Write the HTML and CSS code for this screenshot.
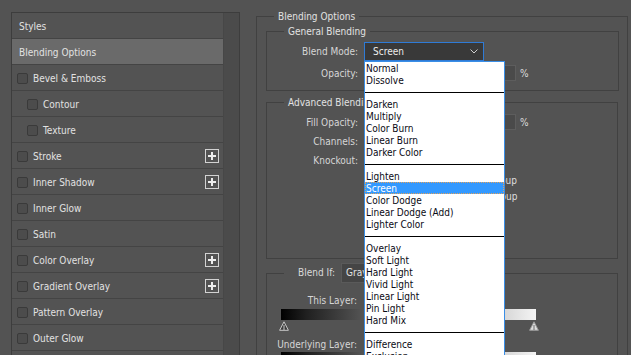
FILE: index.html
```html
<!DOCTYPE html>
<html lang="en">

<head>
    <meta charset="UTF-8" />
    <meta name="viewport" content="width=device-width, initial-scale=1.0" />
    <title>Layer Style</title>
    <link rel="stylesheet" href="styles.css">
</head>

<body>
    <div class="dialog">
        <div class="styles-panel">
            <ul class="style-list">
                <li class="style-item plain">Styles</li>
                <li class="style-item plain selected">Blending Options</li>
                <li class="style-item"><span class="check"></span>Bevel &amp; Emboss</li>
                <li class="style-item sub"><span class="check"></span>Contour</li>
                <li class="style-item sub"><span class="check"></span>Texture</li>
                <li class="style-item"><span class="check"></span>Stroke
                    <span class="add"><svg width="14" height="14" viewBox="0 0 14 14"><rect x="0.5" y="0.5" width="13" height="13" fill="none" stroke="#d2d2d2"/><path d="M7 3v8M3 7h8" stroke="#ececec" stroke-width="2"/></svg></span>
                </li>
                <li class="style-item"><span class="check"></span>Inner Shadow
                    <span class="add"><svg width="14" height="14" viewBox="0 0 14 14"><rect x="0.5" y="0.5" width="13" height="13" fill="none" stroke="#d2d2d2"/><path d="M7 3v8M3 7h8" stroke="#ececec" stroke-width="2"/></svg></span>
                </li>
                <li class="style-item"><span class="check"></span>Inner Glow</li>
                <li class="style-item"><span class="check"></span>Satin</li>
                <li class="style-item"><span class="check"></span>Color Overlay
                    <span class="add"><svg width="14" height="14" viewBox="0 0 14 14"><rect x="0.5" y="0.5" width="13" height="13" fill="none" stroke="#d2d2d2"/><path d="M7 3v8M3 7h8" stroke="#ececec" stroke-width="2"/></svg></span>
                </li>
                <li class="style-item"><span class="check"></span>Gradient Overlay
                    <span class="add"><svg width="14" height="14" viewBox="0 0 14 14"><rect x="0.5" y="0.5" width="13" height="13" fill="none" stroke="#d2d2d2"/><path d="M7 3v8M3 7h8" stroke="#ececec" stroke-width="2"/></svg></span>
                </li>
                <li class="style-item"><span class="check"></span>Pattern Overlay</li>
                <li class="style-item"><span class="check"></span>Outer Glow</li>
                <li class="style-item empty"></li>
            </ul>
            <div class="list-track"></div>
        </div>

        <div class="options">
            <fieldset class="group outer">
                <legend>Blending Options</legend>

                <fieldset class="group general">
                    <legend>General Blending</legend>
                    <div class="row">
                        <span class="label">Blend Mode:</span>
                        <div class="select-wrap">
                            <div class="select focused">
                                <span>Screen</span>
                                <svg class="chevron" width="8" height="5" viewBox="0 0 8 5"><path d="M0.5 0.5L4 4L7.5 0.5" fill="none" stroke="#cfcfcf"/></svg>
                            </div>
                            <ul class="menu">
                                <li>Normal</li>
                                <li>Dissolve</li>
                                <li class="sep"></li>
                                <li>Darken</li>
                                <li>Multiply</li>
                                <li>Color Burn</li>
                                <li>Linear Burn</li>
                                <li>Darker Color</li>
                                <li class="sep"></li>
                                <li>Lighten</li>
                                <li class="active">Screen</li>
                                <li>Color Dodge</li>
                                <li>Linear Dodge (Add)</li>
                                <li>Lighter Color</li>
                                <li class="sep"></li>
                                <li>Overlay</li>
                                <li>Soft Light</li>
                                <li>Hard Light</li>
                                <li>Vivid Light</li>
                                <li>Linear Light</li>
                                <li>Pin Light</li>
                                <li>Hard Mix</li>
                                <li class="sep"></li>
                                <li>Difference</li>
                                <li>Exclusion</li>
                            </ul>
                        </div>
                    </div>
                    <div class="row">
                        <span class="label">Opacity:</span>
                        <div class="slider"></div>
                        <div class="num"></div>
                        <span class="unit">%</span>
                    </div>
                </fieldset>

                <fieldset class="group advanced">
                    <legend>Advanced Blending</legend>
                    <div class="row">
                        <span class="label">Fill Opacity:</span>
                        <div class="slider"></div>
                        <div class="num"></div>
                        <span class="unit">%</span>
                    </div>
                    <div class="row channels">
                        <span class="label">Channels:</span>
                        <span class="check"></span>
                        <span class="check"></span>
                        <span class="check"></span>
                    </div>
                    <div class="row knockout">
                        <span class="label">Knockout:</span>
                        <div class="small-select"></div>
                    </div>
                    <ul class="checks">
                        <li><span class="check"></span>Blend Interior Effects as Group</li>
                        <li><span class="check"></span>Blend Clipped Layers as Group</li>
                        <li><span class="check"></span></li>
                        <li><span class="check"></span></li>
                        <li><span class="check"></span></li>
                    </ul>
                </fieldset>

                <fieldset class="group blend-if">
                    <legend>
                        <span class="legend-label">Blend If:</span>
                        <span class="gray-select">Gray</span>
                    </legend>
                    <div class="row layer-row">
                        <span class="label">This Layer:</span>
                    </div>
                    <div class="ramp"></div>
                    <div class="handles">
                        <svg width="10" height="10" viewBox="0 0 10 10"><path d="M5 0.8L9.4 9.3H0.6Z" fill="#3b3b3b" stroke="#c8c8c8" stroke-linejoin="round"/><path d="M5 4v5" stroke="#c8c8c8"/></svg>
                        <svg width="10" height="10" viewBox="0 0 10 10"><path d="M5 0.8L9.4 9.3H0.6Z" fill="#dedede" stroke="#9a9a9a" stroke-linejoin="round"/><path d="M5 4v5" stroke="#6a6a6a"/></svg>
                    </div>
                    <div class="row layer-row under">
                        <span class="label">Underlying Layer:</span>
                    </div>
                    <div class="ramp"></div>
                </fieldset>
            </fieldset>
        </div>
    </div>
</body>

</html>
```

FILE: styles.css
```css
* {
    box-sizing: border-box;
}

body {
    margin: 0;
    height: 355px;
    overflow: hidden;
    background: #535353;
    color: #dadada;
    font-family: "DejaVu Sans Condensed", "DejaVu Sans", sans-serif;
    font-stretch: condensed;
    font-size: 10px;
}

.dialog {
    display: flex;
    align-items: flex-start;
    padding: 10px 0 0 11px;
}

/* left column: list of layer styles */

.styles-panel {
    display: flex;
    width: 229px;
    margin-top: 2px;
    border: 1px solid #3d3d3d;
    border-bottom: none;
}

.style-list {
    width: 211px;
    margin: 0;
    padding: 0;
    list-style: none;
}

.style-item {
    display: flex;
    align-items: center;
    height: 26px;
    padding: 1px 0 0 5px;
    border-bottom: 1px solid #444;
    color: #e2e2e2;
    white-space: nowrap;
}

.style-item.plain {
    padding-left: 7px;
}

.style-item.sub {
    padding-left: 15px;
}

.style-item.selected {
    background: #6a6a6a;
}

.style-item .check {
    margin-right: 5px;
}

.check {
    display: inline-block;
    flex: none;
    width: 11px;
    height: 11px;
    border: 1px solid #3a3a3a;
    border-radius: 2px;
    background: #4c4c4c;
}

.add {
    display: flex;
    margin-left: auto;
    margin-right: 4px;
}

.list-track {
    width: 16px;
    background: #4b4b4b;
    border-left: 1px solid #474747;
}

/* right column: options */

.options {
    margin-left: 16px;
}

fieldset {
    margin: 0;
    min-width: 0;
    border: 1px solid #414141;
}

legend {
    padding: 0 4px;
    line-height: 13px;
    color: #e2e2e2;
}

.outer {
    width: 372px;
    padding: 2px 8px 0 9px;
    border-bottom: none;
}

.outer > legend {
    margin-left: 8px;
}

.general,
.advanced,
.blend-if {
    width: 353px;
}

.general > legend,
.advanced > legend {
    margin-left: 17px;
}

.general {
    padding: 4px 0 9px;
}

.advanced {
    margin-top: 5px;
    width: 352px;
    padding: 5px 0 6px;
}

.row {
    display: flex;
    align-items: center;
    height: 16px;
    white-space: nowrap;
}

.general .row:first-of-type {
    height: 19px;
    margin-bottom: 4px;
}

.label {
    width: 91px;
    margin-right: 6px;
    text-align: right;
    color: #d6d6d6;
}

.select-wrap {
    position: relative;
}

.select {
    display: flex;
    align-items: center;
    width: 120px;
    height: 19px;
    padding: 0 5px 0 8px;
    background: #393939;
    border: 1px solid #2f7bd6;
    color: #ececec;
}

.chevron {
    margin-left: auto;
}

/* open dropdown list, drawn over the form */
.menu {
    position: absolute;
    top: 19px;
    left: 0;
    z-index: 5;
    width: 141px;
    margin: 0;
    padding: 0;
    list-style: none;
    background: #fff;
    border: 1px solid #3a8ee6;
    border-bottom: none;
    color: #0a0a14;
}

.menu li {
    height: 12px;
    padding: 1px 0 0 1px;
    line-height: 11px;
    white-space: nowrap;
}

.menu .sep {
    background: linear-gradient(#000, #000) center / 100% 1px no-repeat;
}

.menu .active {
    background: #3399ff;
    color: #fff;
    outline: 1px dotted #e3a35c;
    outline-offset: -1px;
}

.slider {
    width: 100px;
    height: 4px;
    background: #3a3a3a;
}

.num {
    width: 40px;
    height: 16px;
    margin-left: 12px;
    background: #4a4a4a;
    border: 1px solid #5d5d5d;
}

.unit {
    margin-left: 4px;
    color: #dedede;
}

.channels {
    margin-top: 3px;
}

.channels .check {
    margin: 0 12px 0 4px;
}

.knockout {
    height: 18px;
    margin-top: 2px;
}

.small-select {
    width: 80px;
    height: 18px;
    background: #444;
    border: 1px solid #5a5a5a;
}

.checks {
    margin: 3px 0 0 97px;
    padding: 0;
    list-style: none;
}

.checks li {
    display: flex;
    align-items: center;
    height: 16px;
    white-space: nowrap;
    color: #dedede;
}

.checks .check {
    margin-right: 4px;
}

/* blend if */

.blend-if {
    width: 352px;
    margin-top: 4px;
    padding: 10px 0 0;
    border-bottom: none;
}

.blend-if > legend {
    display: flex;
    align-items: center;
    margin-left: 17px;
    padding: 0;
    line-height: 20px;
}

.legend-label {
    width: 51px;
    text-align: right;
    color: #dadada;
}

.gray-select {
    width: 90px;
    height: 20px;
    margin-left: 6px;
    padding-left: 4px;
    line-height: 18px;
    background: #454545;
    border: 1px solid #5a5a5a;
}

.layer-row {
    height: 14px;
}

.layer-row .label {
    width: 90px;
}

.under {
    margin-top: 6px;
}

.ramp {
    width: 255px;
    height: 11px;
    margin: 2px 0 0 14px;
    background: linear-gradient(to right, #000 0%, #202020 10%, #f4f4f4 100%);
}

.under + .ramp {
    margin-top: 1px;
}

.handles {
    display: flex;
    justify-content: space-between;
    width: 260px;
    height: 10px;
    margin: 1px 0 0 12px;
}
```
